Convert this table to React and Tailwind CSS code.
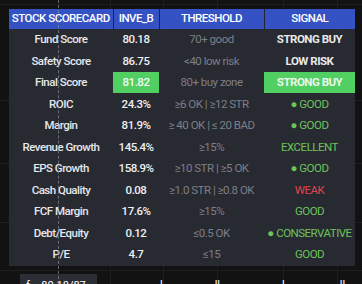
import React from "react";

const rows = [
  { label: "Fund Score", value: "80.18", th: "70+ good", sig: "STRONG BUY", sigCls: "text-[#e8e8ea] font-bold" },
  { label: "Safety Score", value: "86.75", th: "<40 low risk", sig: "LOW RISK", sigCls: "text-[#e8e8ea] font-bold" },
  { label: "Final Score", value: "81.82", th: "80+ buy zone", sig: "STRONG BUY", sigCls: "text-[#eaf7ea] font-bold", hi: true },
  { label: "ROIC", value: "24.3%", th: "≥6 OK | ≥12 STR", sig: "● GOOD", sigCls: "text-[#6cc35a]" },
  { label: "Margin", value: "81.9%", th: "≥ 40 OK | ≤ 20 BAD", sig: "● GOOD", sigCls: "text-[#6cc35a]" },
  { label: "Revenue Growth", value: "145.4%", th: "≥15%", sig: "EXCELLENT", sigCls: "text-[#6cc35a]" },
  { label: "EPS Growth", value: "158.9%", th: "≥10 STR | ≥5 OK", sig: "● GOOD", sigCls: "text-[#6cc35a]" },
  { label: "Cash Quality", value: "0.08", th: "≥1.0 STR | ≥0.8 OK", sig: "WEAK", sigCls: "text-[#e0434c]" },
  { label: "FCF Margin", value: "17.6%", th: "≥15%", sig: "GOOD", sigCls: "text-[#6cc35a]" },
  { label: "Debt/Equity", value: "0.12", th: "≤0.5 OK", sig: "● CONSERVATIVE", sigCls: "text-[#6cc35a]" },
  { label: "P/E", value: "4.7", th: "≤15", sig: "GOOD", sigCls: "text-[#6cc35a]" },
];

export default function App() {
  return (
    <div
      className="relative w-[362px] h-[284px] overflow-hidden bg-[#121212]"
      style={{ fontFamily: 'Roboto, "Open Sans", sans-serif' }}
    >
      {/* chart grid */}
      <div className="absolute inset-0">
        {[110, 163, 217, 283, 337].map((x) => (
          <div key={x} className="absolute top-0 bottom-0 w-px bg-[#1f1f22]" style={{ left: x }} />
        ))}
        {[4, 100, 163, 222, 270].map((y) => (
          <div key={y} className="absolute left-0 right-0 h-px bg-[#1f1f22]" style={{ top: y }} />
        ))}
      </div>

      <div className="relative flex flex-col pl-[9px] pt-[9px]">
        <table className="border-collapse text-[11.5px] tracking-[-0.5px] leading-none w-[346px] table-fixed bg-[#2a2c35]/95">
          <colgroup>
            <col className="w-[104px]" />
            <col className="w-[46px]" />
            <col className="w-[105px]" />
            <col className="w-[91px]" />
          </colgroup>
          <thead>
            <tr className="h-[20px] bg-[#3452c4] text-white">
              <th className="border-r border-[#23262f] font-medium whitespace-nowrap">STOCK SCORECARD</th>
              <th className="border-r border-[#23262f] font-medium">INVE_B</th>
              <th className="border-r border-[#23262f] font-medium">THRESHOLD</th>
              <th className="font-medium">SIGNAL</th>
            </tr>
          </thead>
          <tbody>
            {rows.map((r) => (
              <tr key={r.label} className="h-[21.5px]">
                <td className="text-center text-[#e6e7ea] font-medium whitespace-nowrap">{r.label}</td>
                <td className="p-0">
                  <div
                    className={
                      r.hi
                        ? "h-[21px] flex items-center justify-center bg-[#52cf63] text-[#f2fbf2] font-medium"
                        : "h-[21px] flex items-center justify-center text-[#eeeff1] font-medium"
                    }
                  >
                    {r.value}
                  </div>
                </td>
                <td className="text-center text-[#7c7f88] whitespace-nowrap">{r.th}</td>
                <td className="p-0">
                  <div
                    className={
                      (r.hi ? "bg-[#52cf63] " : "") +
                      "h-[21px] flex items-center justify-center whitespace-nowrap " +
                      r.sigCls
                    }
                  >
                    {r.sig}
                  </div>
                </td>
              </tr>
            ))}
          </tbody>
        </table>

        {/* bottom axis labels */}
        <div className="flex items-start mt-[8px] h-[20px] text-[11px] text-white leading-none">
          <div className="ml-[11px] w-[77px] h-[14px] bg-[#2c2e36] pt-[6px] pl-[6px] whitespace-nowrap">
            f... 80.18/87
          </div>
          <div className="ml-[63px] pt-[5px]">l</div>
          <div className="ml-[52px] pt-[5px]">ll</div>
          <div className="ml-[62px] pt-[5px]">l</div>
          <div className="ml-[55px] pt-[5px]">ll</div>
        </div>
      </div>

      {/* dashed crosshair */}
      <div className="absolute top-0 bottom-0 left-[58px] w-0 border-l border-dashed border-[#8a8c92]/70" />
    </div>
  );
}
